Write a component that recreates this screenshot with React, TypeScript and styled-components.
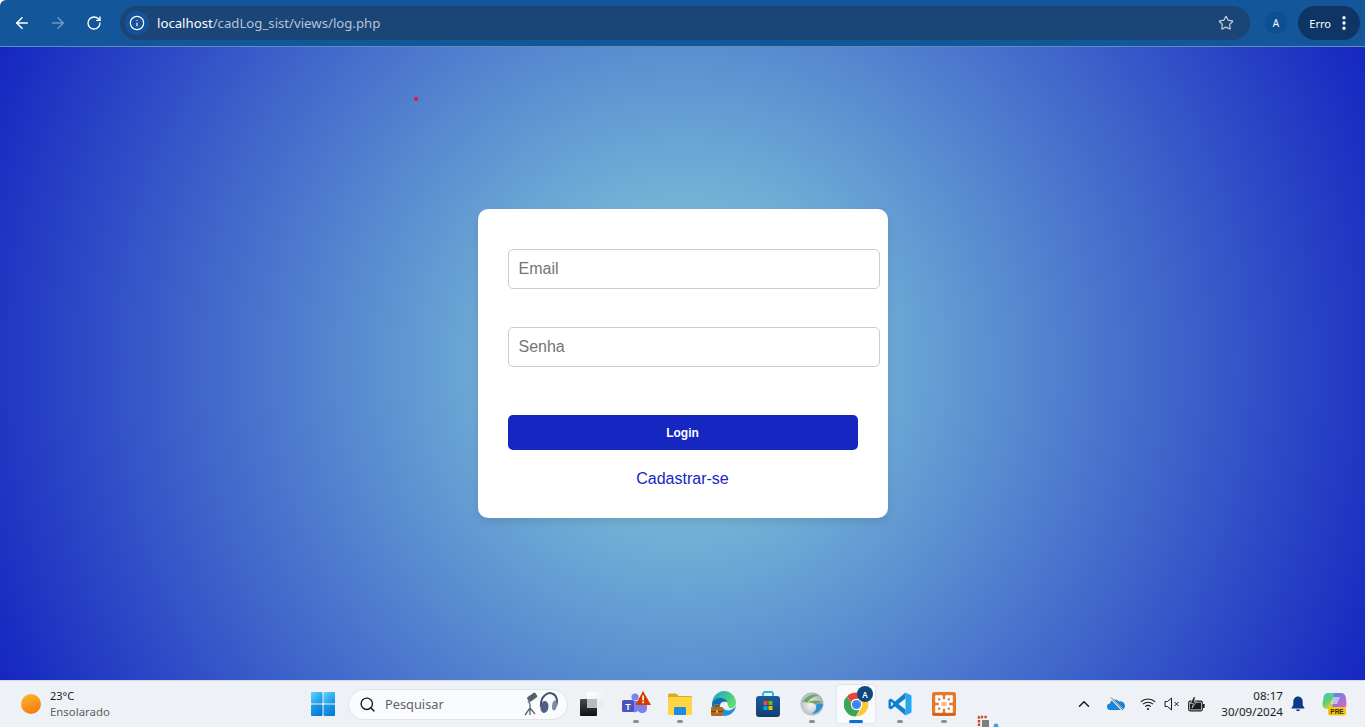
import React from "react";
import styled, { createGlobalStyle } from "styled-components";
import { ArrowLeft, ArrowRight, RotateCw, Info, Star, EllipsisVertical, Search, ChevronUp } from "lucide-react";

const GlobalStyle = createGlobalStyle`
  html, body {
    margin: 0;
    padding: 0;
    height: 100%;
    overflow: hidden;
    font-family: "Liberation Sans", Arial, sans-serif;
  }
  * {
    box-sizing: content-box;
  }
`;

const Screen = styled.div`
  width: 1365px;
  height: 727px;
  display: flex;
  flex-direction: column;
  overflow: hidden;
`;

/* browser toolbar */
const Toolbar = styled.header`
  height: 46px;
  flex-shrink: 0;
  display: flex;
  align-items: center;
  background: #14569a;
  border-bottom: 1px solid #5f8ebd;
  padding: 0 5px 0 4px;
  border-top-left-radius: 6px;
`;

const NavButton = styled.button<{ $dim?: boolean }>`
  width: 36px;
  height: 34px;
  padding: 0;
  border: none;
  background: transparent;
  display: flex;
  align-items: center;
  justify-content: center;
  color: ${(p) => (p.$dim ? "#6f97c2" : "#ffffff")};
`;

const AddressBar = styled.div`
  flex: 1;
  height: 34px;
  margin-left: 8px;
  border-radius: 17px;
  background: #1a4577;
  display: flex;
  align-items: center;
  padding: 0 16px 0 5px;
`;

const SiteInfo = styled.span`
  width: 24px;
  height: 24px;
  border-radius: 50%;
  background: #15529a;
  color: #ffffff;
  display: flex;
  align-items: center;
  justify-content: center;
`;

const Url = styled.div`
  flex: 1;
  margin-left: 8px;
  font-family: "Noto Sans", sans-serif;
  font-size: 13.2px;
  color: #b5c4d6;
`;

const UrlHost = styled.span`
  color: #ffffff;
`;

const Avatar = styled.span`
  width: 22px;
  height: 22px;
  margin: 0 11px 0 15px;
  border-radius: 50%;
  background: #0d4f93;
  color: #ffffff;
  font-family: "Noto Sans", sans-serif;
  font-size: 10px;
  display: flex;
  align-items: center;
  justify-content: center;
`;

const ErrorPill = styled.div`
  width: 55px;
  height: 34px;
  border-radius: 17px;
  background: #0e3563;
  color: #ffffff;
  font-family: "Noto Sans", sans-serif;
  font-size: 11px;
  display: flex;
  align-items: center;
  justify-content: flex-end;
  gap: 4px;
  padding-right: 7px;
`;

/* login page */
const Page = styled.main`
  position: relative;
  flex: 1;
  display: flex;
  align-items: center;
  justify-content: center;
  background: radial-gradient(circle at 50% 50%, #8dd9dc 0%, #1526c1 100%);
`;

const RedDot = styled.span`
  position: absolute;
  left: 414px;
  top: 50px;
  width: 4px;
  height: 4px;
  border-radius: 50%;
  background: #e0162e;
`;

const Card = styled.form`
  width: 350px;
  padding: 40px 30px 30px;
  border-radius: 10px;
  background: #ffffff;
  box-shadow: 0 4px 8px rgba(0, 0, 0, 0.1);
  display: flex;
  flex-direction: column;
`;

const Field = styled.input`
  width: 100%;
  height: 18px;
  padding: 10px;
  border: 1px solid #cccccc;
  border-radius: 5px;
  font-family: "Liberation Sans", Arial, sans-serif;
  font-size: 16px;
  margin-bottom: 38px;
  outline: none;
  &::placeholder {
    color: #757575;
  }
`;

const LoginButton = styled.button`
  width: 100%;
  height: 35px;
  margin-top: 10px;
  padding: 0;
  border: none;
  border-radius: 5px;
  background: #1526c1;
  color: #ffffff;
  font-family: "Liberation Sans", Arial, sans-serif;
  font-size: 12px;
  font-weight: 700;
`;

const SignUp = styled.a`
  margin-top: 20px;
  text-align: center;
  font-size: 16px;
  line-height: 18px;
  color: #1526c1;
  text-decoration: none;
`;

/* windows taskbar */
const Taskbar = styled.footer`
  position: relative;
  height: 46px;
  flex-shrink: 0;
  display: grid;
  grid-template-columns: 301px auto 1fr;
  align-items: center;
  background: #eef2f6;
  border-top: 1px solid #d3dbe6;
  font-family: "Noto Sans", sans-serif;
  overflow: hidden;
`;

const Weather = styled.div`
  display: flex;
  align-items: center;
  gap: 9px;
  padding: 0 0 2px 21px;
`;

const Sun = styled.span`
  width: 20px;
  height: 20px;
  margin-top: 2px;
  border-radius: 50%;
  background: linear-gradient(160deg, #f6bd2a, #f8700f);
`;

const WeatherText = styled.div`
  display: flex;
  flex-direction: column;
  gap: 1px;
`;

const Temp = styled.span`
  font-size: 11px;
  line-height: 15px;
  color: #1a1a1a;
`;

const Condition = styled.span`
  font-size: 11.4px;
  line-height: 15px;
  color: #5c5f63;
`;

const Center = styled.div`
  display: flex;
  align-items: center;
`;

const TaskIcon = styled.div<{ $active?: boolean; $running?: boolean }>`
  position: relative;
  width: ${(p) => (p.$active ? "38px" : "44px")};
  height: 38px;
  margin: ${(p) => (p.$active ? "0 3px" : "0")};
  border-radius: 4px;
  display: flex;
  align-items: center;
  justify-content: center;
  background: ${(p) => (p.$active ? "#f8fafc" : "transparent")};
  box-shadow: ${(p) => (p.$active ? "0 0 0 1px #e3e7ec" : "none")};
  &::after {
    content: "";
    display: ${(p) => (p.$running || p.$active ? "block" : "none")};
    position: absolute;
    bottom: 0;
    left: 50%;
    transform: translateX(-50%);
    width: ${(p) => (p.$active ? "14px" : "6px")};
    height: 3px;
    border-radius: 2px;
    background: ${(p) => (p.$active ? "#0a6fd0" : "#8a8e93")};
  }
`;

const SearchBox = styled.div`
  width: 218px;
  height: 29px;
  margin: 0 2px 0 3px;
  border: 1px solid #dfe3e8;
  border-radius: 16px;
  background: #f9fbfd;
  display: flex;
  align-items: center;
  color: #5e6266;
`;

const SearchLabel = styled.span`
  flex: 1;
  margin-left: 9px;
  font-size: 12.8px;
  color: #5e6266;
`;

const SearchIconWrap = styled.span`
  margin-left: 10px;
  display: flex;
  color: #1b1b1b;
`;

const SearchArtWrap = styled.span`
  display: flex;
  margin-right: 9px;
`;

const Tray = styled.div`
  display: flex;
  align-items: center;
  justify-content: flex-end;
  padding-right: 10px;
`;

const TrayIcon = styled.span<{ $w: number }>`
  width: ${(p) => p.$w}px;
  display: flex;
  justify-content: center;
  color: #1a1a1a;
`;

const Clock = styled.div`
  margin-left: 5px;
  width: 66px;
  text-align: right;
  font-size: 11.6px;
  line-height: 16px;
  color: #1a1a1a;
`;

const BellSlot = styled.span`
  width: 30px;
  display: flex;
  justify-content: center;
`;

const CopilotSlot = styled.span`
  width: 42px;
  display: flex;
  justify-content: center;
`;

const Clipped = styled.span`
  position: absolute;
  left: 977px;
  top: 34px;
  display: flex;
`;

const Badge = styled.span`
  position: absolute;
  right: 2px;
  top: 1px;
  width: 16px;
  height: 16px;
  border-radius: 50%;
  background: #11477f;
  color: #ffffff;
  font-size: 8px;
  font-weight: 600;
  display: flex;
  align-items: center;
  justify-content: center;
`;

const Windows = () => (
  <svg width="24" height="24" viewBox="0 0 24 24">
    <defs>
      <linearGradient id="winA" x1="0" y1="0" x2="1" y2="1">
        <stop offset="0" stopColor="#5fd4fb" />
        <stop offset="1" stopColor="#0f8fe0" />
      </linearGradient>
      <linearGradient id="winB" x1="0" y1="0" x2="1" y2="1">
        <stop offset="0" stopColor="#1ea7ec" />
        <stop offset="1" stopColor="#0670cf" />
      </linearGradient>
    </defs>
    <rect x="0" y="0" width="11.5" height="11.5" rx="1" fill="url(#winA)" />
    <rect x="12.5" y="0" width="11.5" height="11.5" rx="1" fill="url(#winA)" />
    <rect x="0" y="12.5" width="11.5" height="11.5" rx="1" fill="url(#winB)" />
    <rect x="12.5" y="12.5" width="11.5" height="11.5" rx="1" fill="url(#winB)" />
  </svg>
);

const SearchArt = () => (
  <svg width="36" height="24" viewBox="0 0 36 24">
    <rect x="5" y="2.5" width="10" height="5.5" rx="1.5" transform="rotate(-35 10 5)" fill="#56616c" />
    <path d="M6 9 L8 12 M8 12 L8 17 M8 16 L3 23 M8 16 L8 23 M8 16 L13 22" stroke="#5b6670" strokeWidth="1.3" fill="none" />
    <path d="M19 15 C18 4 26 0 30 1.5 C35 3 36 9 34 14" fill="none" stroke="#46526f" strokeWidth="2" />
    <ellipse cx="22.5" cy="15" rx="4" ry="6" fill="#4f5f86" transform="rotate(8 22.5 15)" />
    <ellipse cx="32.5" cy="13.5" rx="2.4" ry="5" fill="#7f8ba8" transform="rotate(8 32.5 13.5)" />
  </svg>
);

const TaskView = () => (
  <svg width="26" height="26" viewBox="0 0 26 26">
    <defs>
      <linearGradient id="tvA" x1="0" y1="0" x2="1" y2="1">
        <stop offset="0" stopColor="#ffffff" />
        <stop offset="1" stopColor="#e6e8eb" />
      </linearGradient>
      <linearGradient id="tvB" x1="0" y1="0" x2="0" y2="1">
        <stop offset="0" stopColor="#4a4a4a" />
        <stop offset="1" stopColor="#111111" />
      </linearGradient>
    </defs>
    <rect x="1" y="8" width="17" height="17" rx="1" fill="url(#tvB)" />
    <rect x="8" y="1" width="17" height="16" rx="1" fill="url(#tvA)" />
    <rect x="8" y="8" width="10" height="9" fill="#b9bbbe" />
  </svg>
);

const Teams = () => (
  <svg width="30" height="26" viewBox="0 0 30 26">
    <circle cx="14" cy="6" r="3.6" fill="#7b83eb" />
    <circle cx="22" cy="8" r="3" fill="#5059c9" />
    <path d="M8 10 H26 V18 A5 5 0 0 1 17 20 A6 6 0 0 1 8 18 Z" fill="#7b83eb" />
    <rect x="1" y="9" width="12" height="12" rx="1.5" fill="#4b53bc" />
    <text x="7" y="18.5" fontSize="9" fontWeight="700" fill="#fff" textAnchor="middle" fontFamily="Liberation Sans">T</text>
    <path d="M22 0 L30 14 H14.5 Z" fill="#d83b01" />
    <rect x="21.3" y="4.5" width="1.7" height="5" fill="#fff" />
    <rect x="21.3" y="10.5" width="1.7" height="1.7" fill="#fff" />
  </svg>
);

const Explorer = () => (
  <svg width="26" height="24" viewBox="0 0 26 24">
    <path d="M1 3 A1.5 1.5 0 0 1 2.5 1.5 H9 L12 4 H24 A1.5 1.5 0 0 1 25 5.5 V9 H1 Z" fill="#e0a81e" />
    <rect x="1" y="5" width="24" height="18" rx="1.5" fill="#fdd545" />
    <rect x="7" y="15" width="12" height="8" rx="1" fill="#1c8ce0" />
  </svg>
);

const Edge = () => (
  <svg width="26" height="26" viewBox="0 0 26 26">
    <defs>
      <linearGradient id="edgeA" x1="0" y1="0" x2="1" y2="0.6">
        <stop offset="0" stopColor="#14a3d0" />
        <stop offset="1" stopColor="#63dc6c" />
      </linearGradient>
    </defs>
    <path d="M1 12 C2 3 9 0 13 0 C20 0 25 6 25 12 C25 16 21 18 18 17 L16 11 Z" fill="url(#edgeA)" />
    <path d="M1 13 C3 6 13 5 17 11 C13 9 9 11 9 15 C9 19 12 22 16 23 C8 25 1 20 1 13 Z" fill="#0f6cb8" />
    <path d="M12 17 C15 21 21 20 25 15 C24 21 19 25 13 25 C10 24 9 21 12 17 Z" fill="#1a92dc" />
    <rect x="0" y="16" width="12" height="9" rx="1" fill="#b26a1e" />
    <rect x="0" y="20" width="12" height="1.2" fill="#7a430e" />
    <rect x="3.5" y="13.5" width="5" height="3" rx="1" fill="none" stroke="#b26a1e" strokeWidth="1.2" />
    <rect x="5" y="19.5" width="2" height="2.2" fill="#f2c15c" />
  </svg>
);

const Store = () => (
  <svg width="24" height="26" viewBox="0 0 24 26">
    <defs>
      <linearGradient id="storeA" x1="0" y1="0" x2="0" y2="1">
        <stop offset="0" stopColor="#1a5c9e" />
        <stop offset="1" stopColor="#123f70" />
      </linearGradient>
    </defs>
    <path d="M7 6 V3 A2 2 0 0 1 9 1 H15 A2 2 0 0 1 17 3 V6" fill="none" stroke="#1fb6e8" strokeWidth="1.8" />
    <rect x="0" y="5" width="24" height="21" rx="3" fill="url(#storeA)" />
    <rect x="7.5" y="10" width="4" height="4" fill="#f25022" />
    <rect x="12.5" y="10" width="4" height="4" fill="#7fba00" />
    <rect x="7.5" y="15" width="4" height="4" fill="#00a4ef" />
    <rect x="12.5" y="15" width="4" height="4" fill="#ffb900" />
  </svg>
);

const Globe = () => (
  <svg width="24" height="24" viewBox="0 0 24 24">
    <defs>
      <radialGradient id="globeA" cx="0.45" cy="0.55" r="0.55">
        <stop offset="0" stopColor="#f2f5f6" />
        <stop offset="1" stopColor="#a9b4ba" />
      </radialGradient>
    </defs>
    <circle cx="12" cy="12" r="11.5" fill="url(#globeA)" />
    <path d="M2 11 C5 4 13 1 19 3 C15 4 10 6 7 11 C5 9 3.5 9.5 2 11 Z" fill="#6aa85f" />
    <path d="M7 11 C11 8 17 8 23 10 C20 10 17 11 16 13 C14 11 10 10 7 11 Z" fill="#6aa85f" />
    <path d="M16 13 C18 11 20 11 23 12 C22 18 17 22 11 22 C15 20 17 17 16 13 Z" fill="#2f8fd0" />
  </svg>
);

const ChromeLogo = () => (
  <svg width="25" height="25" viewBox="0 0 24 24">
    <path d="M12 0.5 A11.5 11.5 0 0 1 22 6.5 H12 A5.5 5.5 0 0 0 6.8 10.2 L3 4 A11.5 11.5 0 0 1 12 0.5 Z" fill="#e8443a" />
    <path d="M22 6.5 A11.5 11.5 0 0 1 12 23.5 L17 14.5 A5.5 5.5 0 0 0 15.5 8 Z" fill="#fbc92f" />
    <path d="M3 4 L8 13 A5.5 5.5 0 0 0 15 16.7 L11.5 23.5 A11.5 11.5 0 0 1 3 4 Z" fill="#3aa757" />
    <circle cx="12" cy="12" r="5.4" fill="#ffffff" />
    <circle cx="12" cy="12" r="4.4" fill="#3f86f4" />
  </svg>
);

const VsCode = () => (
  <svg width="24" height="24" viewBox="0 0 24 24">
    <path d="M17.5 0.5 L17.5 6.5 L10.5 12 L17.5 17.5 V23.5 L7 14.5 L3 17.5 L0.5 16 V8 L3 6.5 L7 9.5 Z" fill="#0e7fd0" />
    <path d="M3 9.5 L5.5 11.9 L3 14.5 Z" fill="#eef2f6" />
    <path d="M17.5 0.5 L23.5 3.5 V20.5 L17.5 23.5 Z" fill="#22a7f0" />
  </svg>
);

const Xampp = () => (
  <svg width="24" height="24" viewBox="0 0 24 24">
    <rect x="0" y="0" width="24" height="24" rx="2.5" fill="#e8772e" />
    <rect x="0.5" y="21.5" width="23" height="2" rx="1" fill="#c85f1e" />
    <path d="M4 4 H10 V8 H14 V4 H20 V10 H16.5 V14 H20 V20 H14 V16 H10 V20 H4 V14 H7.5 V10 H4 Z" fill="#ffffff" stroke="#ffffff" strokeWidth="1.6" strokeLinejoin="round" />
    <rect x="6" y="6" width="2.4" height="2.4" rx="1" fill="#e8772e" />
    <rect x="15.6" y="6" width="2.4" height="2.4" rx="1" fill="#e8772e" />
    <rect x="6" y="15.6" width="2.4" height="2.4" rx="1" fill="#e8772e" />
    <rect x="15.6" y="15.6" width="2.4" height="2.4" rx="1" fill="#e8772e" />
    <path d="M9.5 11 H14.5 M9.5 13 H14.5" stroke="#e8772e" strokeWidth="1.1" />
  </svg>
);

const OneDrive = () => (
  <svg width="18" height="14" viewBox="0 0 18 14">
    <path d="M3.5 13 A3.2 3.2 0 0 1 3 6.6 A5 5 0 0 1 12 4.6 A4 4 0 0 1 15 13 Z" fill="#1a84d8" />
    <path d="M4 1 L16 13.5" stroke="#eef2f6" strokeWidth="2.4" />
    <path d="M4 0.5 L16 13" stroke="#5f6a75" strokeWidth="1" />
  </svg>
);

const Wifi = () => (
  <svg width="16" height="14" viewBox="0 0 16 14" fill="none" stroke="#1a1a1a" strokeWidth="1.1">
    <path d="M0.8 4.8 A10.5 10.5 0 0 1 15.2 4.8" />
    <path d="M3 7.2 A7.3 7.3 0 0 1 13 7.2" />
    <path d="M5.3 9.6 A3.9 3.9 0 0 1 10.7 9.6" />
    <circle cx="8" cy="12" r="1.1" fill="#1a1a1a" stroke="none" />
  </svg>
);

const Muted = () => (
  <svg width="16" height="14" viewBox="0 0 16 14" fill="none" stroke="#1a1a1a" strokeWidth="1">
    <path d="M1 4.5 H3.5 L7.5 1 V13 L3.5 9.5 H1 Z" />
    <path d="M10.5 5 L14.5 9 M14.5 5 L10.5 9" />
  </svg>
);

const Battery = () => (
  <svg width="17" height="15" viewBox="0 0 17 15">
    <rect x="0.7" y="4.2" width="13.6" height="9.6" rx="1.5" fill="#eef2f6" stroke="#1a1a1a" strokeWidth="1.2" />
    <rect x="2" y="5.5" width="11" height="7" fill="#1a1a1a" />
    <rect x="15" y="7" width="1.6" height="4" fill="#1a1a1a" />
    <path d="M5.5 0 L2.5 6.5 H5.5 L4 11 L8.5 5 H6 L7.5 0 Z" fill="#1a1a1a" stroke="#eef2f6" strokeWidth="0.6" />
  </svg>
);

const Bell = () => (
  <svg width="14" height="16" viewBox="0 0 14 16">
    <path d="M7 0.5 A4.7 4.7 0 0 1 11.7 5.2 V9 L13.7 12.5 H0.3 L2.3 9 V5.2 A4.7 4.7 0 0 1 7 0.5 Z" fill="#0b3a8c" />
    <path d="M4.8 13.5 H9.2 A2.3 2.3 0 0 1 4.8 13.5 Z" fill="#0b3a8c" />
  </svg>
);

const Copilot = () => (
  <svg width="25" height="24" viewBox="0 0 25 24">
    <defs>
      <linearGradient id="copA" x1="0" y1="0" x2="0.6" y2="1">
        <stop offset="0" stopColor="#3fc4e8" />
        <stop offset="0.55" stopColor="#5fd06a" />
        <stop offset="1" stopColor="#f4d03a" />
      </linearGradient>
      <linearGradient id="copB" x1="0" y1="0" x2="1" y2="1">
        <stop offset="0" stopColor="#4a8cf0" />
        <stop offset="1" stopColor="#e85fc0" />
      </linearGradient>
    </defs>
    <path d="M6 1 C3 1 2 3 1.5 5 L0.5 12 C0.5 15 2 17 5 17 H9 L14 3 C14 2 13 1 12 1 Z" fill="url(#copA)" />
    <path d="M12 1 H19 C22 1 23.5 3 24 6 L24.5 12 C24.5 15 23 16 21 16 H10 Z" fill="url(#copB)" />
    <path d="M11 5 H18 L15 12 H8.5 Z" fill="#f3f6fa" opacity="0.55" />
    <rect x="6" y="15" width="18" height="8.5" rx="2" fill="#f5c518" />
    <text x="15" y="21.8" fontSize="6.5" fontWeight="700" fill="#3a2c00" textAnchor="middle" fontFamily="Liberation Sans">PRE</text>
  </svg>
);

const Snip = () => (
  <svg width="24" height="12" viewBox="0 0 24 12">
    <path d="M2 11 V2 H11" fill="none" stroke="#d2452b" strokeWidth="2.4" strokeDasharray="2.4 1.2" />
    <rect x="5" y="5" width="7" height="7" fill="#7a7f85" />
    <circle cx="19" cy="11" r="2.4" fill="#38a3e0" />
  </svg>
);

export default function App() {
  return (
    <Screen>
      <GlobalStyle />
      <Toolbar>
        <NavButton><ArrowLeft size={18} strokeWidth={2} /></NavButton>
        <NavButton $dim><ArrowRight size={18} strokeWidth={2} /></NavButton>
        <NavButton><RotateCw size={16} strokeWidth={2} /></NavButton>
        <AddressBar>
          <SiteInfo><Info size={16} strokeWidth={1.8} /></SiteInfo>
          <Url><UrlHost>localhost</UrlHost>/cadLog_sist/views/log.php</Url>
          <Star size={16} strokeWidth={1.8} color="#c4ccd6" />
        </AddressBar>
        <Avatar>A</Avatar>
        <ErrorPill>Erro<EllipsisVertical size={18} strokeWidth={2.4} /></ErrorPill>
      </Toolbar>

      <Page>
        <RedDot />
        <Card onSubmit={(e) => e.preventDefault()}>
          <Field type="email" placeholder="Email" />
          <Field type="password" placeholder="Senha" />
          <LoginButton type="submit">Login</LoginButton>
          <SignUp href="#">Cadastrar-se</SignUp>
        </Card>
      </Page>

      <Taskbar>
        <Weather>
          <Sun />
          <WeatherText>
            <Temp>23°C</Temp>
            <Condition>Ensolarado</Condition>
          </WeatherText>
        </Weather>
        <Center>
          <TaskIcon><Windows /></TaskIcon>
          <SearchBox>
            <SearchIconWrap><Search size={17} strokeWidth={2} /></SearchIconWrap>
            <SearchLabel>Pesquisar</SearchLabel>
            <SearchArtWrap><SearchArt /></SearchArtWrap>
          </SearchBox>
          <TaskIcon><TaskView /></TaskIcon>
          <TaskIcon $running><Teams /></TaskIcon>
          <TaskIcon $running><Explorer /></TaskIcon>
          <TaskIcon><Edge /></TaskIcon>
          <TaskIcon><Store /></TaskIcon>
          <TaskIcon $running><Globe /></TaskIcon>
          <TaskIcon $active>
            <ChromeLogo />
            <Badge>A</Badge>
          </TaskIcon>
          <TaskIcon $running><VsCode /></TaskIcon>
          <TaskIcon $running><Xampp /></TaskIcon>
        </Center>
        <Tray>
          <TrayIcon $w={32}><ChevronUp size={18} strokeWidth={2} /></TrayIcon>
          <TrayIcon $w={32}><OneDrive /></TrayIcon>
          <TrayIcon $w={32}><Wifi /></TrayIcon>
          <TrayIcon $w={16}><Muted /></TrayIcon>
          <TrayIcon $w={32}><Battery /></TrayIcon>
          <Clock>08:17<br />30/09/2024</Clock>
          <BellSlot><Bell /></BellSlot>
          <CopilotSlot><Copilot /></CopilotSlot>
        </Tray>
        <Clipped><Snip /></Clipped>
      </Taskbar>
    </Screen>
  );
}
